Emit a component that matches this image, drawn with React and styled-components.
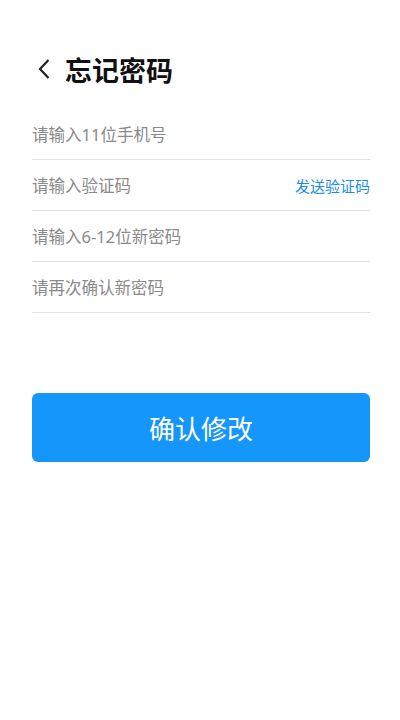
import styled, { createGlobalStyle } from "styled-components";

const GlobalStyle = createGlobalStyle`
  body {
    margin: 0;
    background: #fff;
    font-family: "Noto Sans", "Noto Sans CJK SC", sans-serif;
  }
`;

export default function App() {
  return (
    <Page>
      <GlobalStyle />
      <Header>
        <BackButton aria-label="back">
          <svg width="14" height="22" viewBox="0 0 14 22">
            <path d="M11.5 2 L3 11 L11.5 20" fill="none" stroke="#222" strokeWidth="2.2" />
          </svg>
        </BackButton>
        <Title>忘记密码</Title>
      </Header>
      <Form>
        <Field>
          <Input placeholder="请输入11位手机号" />
        </Field>
        <Field>
          <Input placeholder="请输入验证码" />
          <SendCode>发送验证码</SendCode>
        </Field>
        <Field>
          <Input type="password" placeholder="请输入6-12位新密码" />
        </Field>
        <Field>
          <Input type="password" placeholder="请再次确认新密码" />
        </Field>
      </Form>
      <Submit>确认修改</Submit>
    </Page>
  );
}

const Page = styled.div`
  padding: 50px 30px 0 32px;
  display: flex;
  flex-direction: column;
`;

const Header = styled.div`
  height: 38px;
  display: flex;
  align-items: center;
  gap: 14px;
`;

const BackButton = styled.button`
  background: none;
  border: 0;
  padding: 0 0 0 5px;
  display: flex;
  align-items: center;
`;

const Title = styled.h1`
  margin: 0;
  font-size: 27px;
  font-weight: 700;
  color: #111;
  font-family: "Noto Sans CJK SC", sans-serif;
`;

const Form = styled.div`
  margin-top: 21px;
  display: flex;
  flex-direction: column;
`;

const Field = styled.div`
  height: 50px;
  border-bottom: 1px solid #e1e1e1;
  display: flex;
  align-items: center;
`;

const Input = styled.input`
  flex: 1;
  min-width: 0;
  border: 0;
  outline: none;
  padding: 0;
  font-size: 16.5px;
  font-family: "Noto Sans", "Noto Sans CJK SC", sans-serif;
  color: #333;
  &::placeholder {
    color: #8a8a8a;
  }
`;

const SendCode = styled.button`
  background: none;
  border: 0;
  padding: 0;
  font-size: 15px;
  color: #1b8fe6;
  font-family: "Noto Sans CJK SC", sans-serif;
`;

const Submit = styled.button`
  margin-top: 80px;
  height: 69px;
  border: 0;
  border-radius: 6px;
  background: #1596fb;
  color: #fff;
  font-size: 26px;
  font-family: "Noto Sans CJK SC", sans-serif;
`;
